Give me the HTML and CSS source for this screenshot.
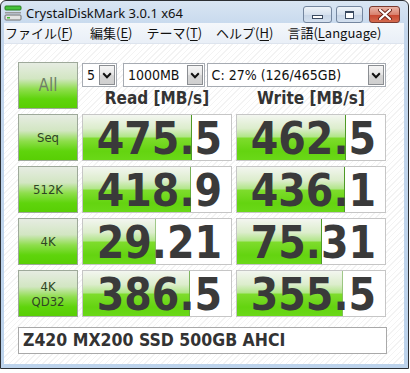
FILE: index.html
```html
<!DOCTYPE html>
<html>
	<head>
		<meta charset="utf-8" />
		<title>CrystalDiskMark 3.0.1 x64</title>
		<link rel="stylesheet" href="styles.css">
	</head>
	<body>
		<div class="window">
			<div class="titlebar">
				<svg class="app-icon" width="18" height="16" viewBox="0 0 18 16">
					<rect x="1" y="1" width="16" height="4" rx="1" fill="#45c23a" stroke="#2b7f22" stroke-width="1"/>
					<rect x="1" y="7" width="16" height="1.5" fill="#9a9a9a"/>
					<rect x="1" y="10" width="16" height="5" rx="1" fill="#e4e4e4" stroke="#6f6f6f" stroke-width="1"/>
					<rect x="3" y="12" width="3" height="1.5" fill="#3fbf2f"/>
				</svg>
				<span class="title">CrystalDiskMark 3.0.1 x64</span>
				<div class="caption">
					<span class="cap-btn min"><i></i></span>
					<span class="cap-btn max"><i></i></span>
					<span class="cap-btn close">
						<svg width="14" height="11" viewBox="0 0 14 11">
							<path d="M2 1 L12 10 M12 1 L2 10" stroke="#6a2418" stroke-width="4" stroke-linecap="round"/>
							<path d="M2 1 L12 10 M12 1 L2 10" stroke="#fff" stroke-width="2.2" stroke-linecap="round"/>
						</svg>
					</span>
				</div>
			</div>
			<div class="frame">
				<ul class="menu">
					<li class="m-file">ファイル(<u>F</u>)</li>
					<li>編集(<u>E</u>)</li>
					<li>テーマ(<u>T</u>)</li>
					<li>ヘルプ(<u>H</u>)</li>
					<li>言語(<u>L</u>anguage)</li>
				</ul>
				<div class="client">
					<div class="board">
						<div class="btn all">All</div>
						<div class="controls">
							<div class="combos">
								<div class="combo c-count"><span>5</span><b><svg width="10" height="7" viewBox="0 0 10 7"><path d="M1.2 1.2 L5 5.2 L8.8 1.2" fill="none" stroke="#111" stroke-width="2"/></svg></b></div>
								<div class="combo c-size"><span>1000MB</span><b><svg width="10" height="7" viewBox="0 0 10 7"><path d="M1.2 1.2 L5 5.2 L8.8 1.2" fill="none" stroke="#111" stroke-width="2"/></svg></b></div>
								<div class="combo c-drive"><span>C: 27% (126/465GB)</span><b><svg width="10" height="7" viewBox="0 0 10 7"><path d="M1.2 1.2 L5 5.2 L8.8 1.2" fill="none" stroke="#111" stroke-width="2"/></svg></b></div>
							</div>
							<div class="head">Read [MB/s]</div>
							<div class="head">Write [MB/s]</div>
						</div>

						<div class="btn">Seq</div>
						<div class="val" style="--fill: 73.9%">475.5</div>
						<div class="val" style="--fill: 73.7%">462.5</div>

						<div class="btn">512K</div>
						<div class="val" style="--fill: 72.8%">418.9</div>
						<div class="val" style="--fill: 73.2%">436.1</div>

						<div class="btn">4K</div>
						<div class="val" style="--fill: 49%">29.21</div>
						<div class="val" style="--fill: 57.5%">75.31</div>

						<div class="btn two">4K<br>QD32</div>
						<div class="val" style="--fill: 72.1%">386.5</div>
						<div class="val" style="--fill: 71.3%">355.5</div>
					</div>
					<div class="comment">Z420 MX200 SSD 500GB AHCI</div>
				</div>
			</div>
		</div>
	</body>
</html>
```

FILE: styles.css
```css
body,ul,li{
	margin: 0;
	padding: 0;
}
ul,li{
	list-style: none;
}
body{
	background: #fff;
	font-family: "DejaVu Sans Condensed", "DejaVu Sans", sans-serif;
	font-stretch: condensed;
}
.window{
	width: 407px;
	height: 367px;
	border: 1px solid #2c2f33;
	border-radius: 6px 6px 0 0;
	background: linear-gradient(#d9e5f3, #c3d6ec 30px, #bcd3ec);
	overflow: hidden;
}
/* title bar */
.titlebar{
	height: 22px;
	display: flex;
	align-items: center;
	padding-left: 3px;
}
.app-icon{
	display: block;
	margin-right: 4px;
	margin-top: 1px;
}
.title{
	font-family: "Noto Sans", sans-serif;
	font-stretch: normal;
	font-size: 13px;
	color: #111;
	margin-top: 1px;
}
.caption{
	margin-left: auto;
	margin-right: 8px;
	margin-top: 5px;
	display: flex;
}
.cap-btn{
	height: 15px;
	border: 1px solid #74869f;
	border-radius: 3px;
	background: linear-gradient(#eef3f9, #d6e1ee 50%, #c6d4e6 51%, #d3e0ef);
	display: flex;
	align-items: center;
	justify-content: center;
}
.cap-btn.min{
	width: 27px;
	margin-right: 4px;
}
.cap-btn.max{
	width: 25px;
	margin-right: 6px;
}
.cap-btn.close{
	width: 29px;
	border-color: #7a3a30;
	background: linear-gradient(#e9b3a6, #d9826f 50%, #c7452f 51%, #d46a4e);
}
.cap-btn.min i{
	width: 9px;
	height: 2px;
	border: 1px solid #3a4a60;
	background: #fff;
	margin-top: 4px;
}
.cap-btn.max i{
	width: 7px;
	height: 5px;
	border: 1px solid #3a4a60;
	border-top-width: 2px;
	background: #fff;
}
/* frame + menu */
.frame{
	padding: 0 4px 4px 3px;
}
.menu{
	height: 21px;
	display: flex;
	background: linear-gradient(#f4f7fb, #e9eff7);
	border-bottom: 1px solid #dde4ee;
	box-sizing: border-box;
	font-family: "Noto Sans CJK JP", sans-serif;
	font-stretch: normal;
	font-size: 13px;
	line-height: 20px;
	color: #111;
	padding-left: 1px;
}
.menu li{
	margin-right: 14px;
	white-space: nowrap;
}
.menu .m-file{
	margin-right: 17px;
}
.menu u{
	text-decoration-thickness: 1px;
	text-underline-offset: 2px;
}
/* client */
.client{
	height: 320px;
	box-sizing: border-box;
	padding: 18px 0 0 14px;
	background: repeating-linear-gradient(-45deg, #fff 0 3px, #f3f3f3 3px 4px);
}
.board{
	display: grid;
	grid-template-columns: 60px 150px 150px;
	grid-template-rows: repeat(5, 47px);
	column-gap: 4px;
	row-gap: 5px;
}
.btn{
	box-sizing: border-box;
	border: 1px solid #9ea99a;
	background: linear-gradient(#e6ece2, #d2e6c2 35%, #8ede4c 58%, #5fd40c 80%, #58cf04);
	display: flex;
	align-items: center;
	justify-content: center;
	text-align: center;
	font-size: 13px;
	line-height: 15px;
	color: #2f4424;
}
.btn.all{
	font-size: 17px;
	color: #6f7e66;
}
.btn.two{
	padding-top: 1px;
}
.controls{
	grid-column: 2 / 4;
	display: grid;
	grid-template-columns: 150px 150px;
	column-gap: 4px;
	grid-template-rows: 25px 22px;
}
.combos{
	grid-column: 1 / 3;
	display: flex;
	padding-top: 1px;
}
.combo{
	height: 24px;
	box-sizing: border-box;
	border: 1px solid #a6abb2;
	background: #fff;
	display: flex;
	align-items: center;
	font-size: 14px;
	color: #111;
}
.combo span{
	flex: 1;
	padding-left: 4px;
	white-space: nowrap;
}
.combo b{
	width: 16px;
	height: 20px;
	margin-right: 1px;
	box-sizing: border-box;
	border: 1px solid #8b8e92;
	background: linear-gradient(#f5f5f5, #e6e6e6 50%, #d6d6d6 51%, #cfcfcf);
	display: flex;
	align-items: center;
	justify-content: center;
}
.c-count{
	width: 35px;
	margin-right: 6px;
}
.c-size{
	width: 82px;
	margin-right: 2px;
}
.c-drive{
	width: 180px;
}
.head{
	text-align: center;
	font-weight: bold;
	font-size: 17px;
	line-height: 22px;
	color: #333;
}
.val{
	box-sizing: border-box;
	border: 1px solid #c6c6c6;
	background:
		linear-gradient(to left, #4f9a26 1px, transparent 1px) 0 0 / var(--fill) 100% no-repeat,
		linear-gradient(#f3f6f0, #dcedcc 30%, #b2e68a 48%, #7edc2c 52%, #64d410 80%, #6ad818) 0 0 / var(--fill) 100% no-repeat,
		#fff;
	text-align: right;
	padding-right: 9px;
	font-weight: bold;
	font-size: 44px;
	line-height: 47px;
	color: #3a3a3a;
}
.comment{
	margin-top: 10px;
	width: 369px;
	height: 27px;
	box-sizing: border-box;
	border: 1px solid #a9a9a9;
	background: #fff;
	padding-left: 4px;
	font-weight: bold;
	font-size: 17.5px;
	line-height: 25px;
	color: #333;
}
```
